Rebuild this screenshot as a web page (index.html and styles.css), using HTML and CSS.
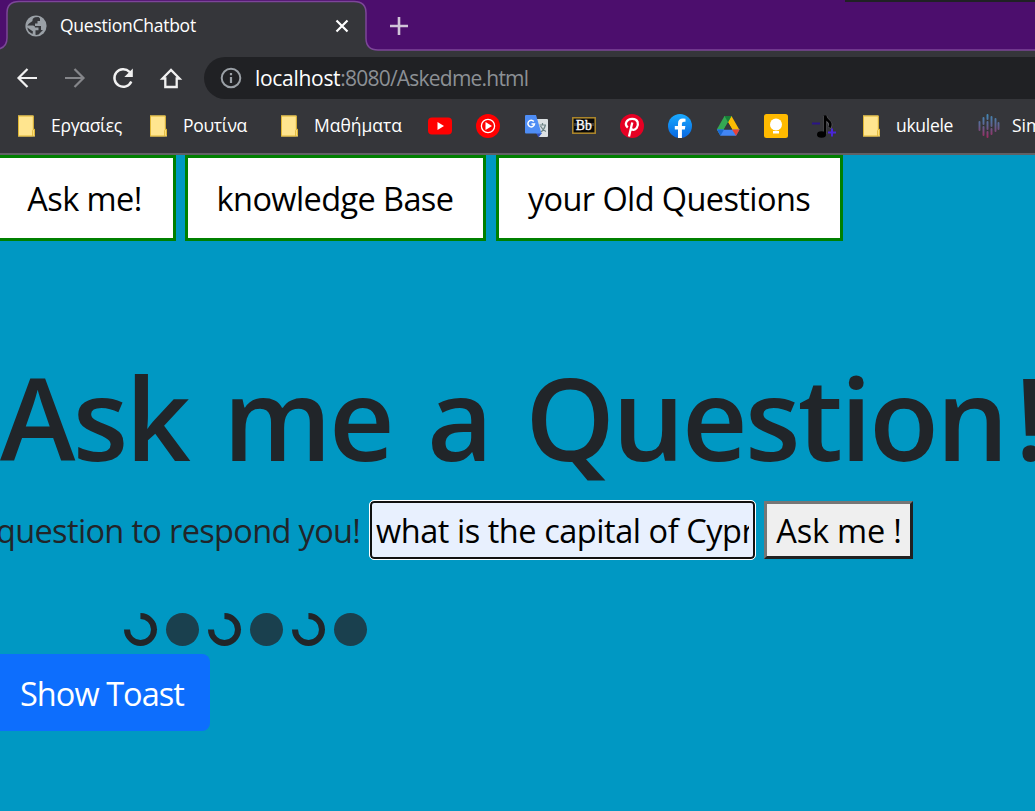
FILE: index.html
```html
<!DOCTYPE html>
<html lang="en">
<head>
<meta charset="utf-8">
<title>QuestionChatbot</title>
<link rel="stylesheet" href="styles.css">
</head>
<body>
<svg class="defs" width="0" height="0">
  <symbol id="folder" viewBox="0 0 24 24"><path d="M3 1.500h15.500v14H20V22.500H3z" fill="#ffe58f"/><path d="M3.500 2v20h14.200v-5.500q0-1.300 1.300-1.300h.5v6q0 .8-1 .8M3 2h15.300v13" fill="none" stroke="#dfb634"/></symbol>
</svg>
<header class="browser">
  <div class="tabstrip">
    <svg class="tab-shape" viewBox="0 0 1035 51"><path d="M-6 51V49.500Q7 49.500 7 38V13Q7 1.500 19 1.500H354Q366 1.500 366 13V38Q366 50 378 50H1036V53H-6z" fill="#35363a" stroke="#7c4698" stroke-width="1.500"/><path d="M845 0H1035V2H845z" fill="#202124"/></svg>
    <div class="tab">
      <svg class="globe" viewBox="0 0 24 24"><circle cx="12" cy="12" r="10.600" fill="#9aa0a6"/><path d="M11 3.200Q8 4.500 8.500 7L5 9.500 3.300 11.500H9q2 0 2 2h3.500v2.700h-3v4.600q1 .3 3-.3l4.500-4.500h-2V12H11V9.500h2.500V7H16V4.500L14.500 3zM3.300 13.500Q4 18 8.500 20l.5-2.500z" fill="#35363a"/></svg>
      <span class="tab-title">QuestionChatbot</span>
      <svg class="close" viewBox="0 0 14 14"><path d="m1.500 1.500 11 11m0-11-11 11" stroke="#fff" stroke-width="2.200"/></svg>
    </div>
    <svg class="plus" viewBox="0 0 20 20"><path d="M10 1v18M1 10h18" stroke="#d0c4d8" stroke-width="2.600"/></svg>
  </div>
  <div class="toolbar">
    <svg class="tool" viewBox="0 0 24 24"><path d="M22 12H4m8.500-9L3.500 12l9 9" fill="none" stroke="#f1f1f1" stroke-width="2.200"/></svg>
    <svg class="tool" viewBox="0 0 24 24"><path d="M2 12h18m-8.500-9 9 9-9 9" fill="none" stroke="#85868a" stroke-width="2.200"/></svg>
    <svg class="tool" viewBox="0 0 24 24"><path d="M20.300 15.500A8.800 8.800 0 1 1 18.500 5.800L20 7" fill="none" stroke="#f1f1f1" stroke-width="2.400"/><path d="M21.800 2.500v8.500h-8.500z" fill="#f1f1f1"/></svg>
    <svg class="tool" viewBox="0 0 24 24"><path d="M3.500 12.500 12 4l8.500 8.500h-2.800V21H6.300v-8.500z" fill="none" stroke="#f1f1f1" stroke-width="2.300"/></svg>
    <div class="address">
      <svg class="info" viewBox="0 0 22 22"><circle cx="11" cy="11" r="9.300" fill="none" stroke="#9aa0a6" stroke-width="2"/><path d="M11 10v6M11 6v2.200" stroke="#9aa0a6" stroke-width="2.200"/></svg>
      <span class="url"><b class="host">localhost</b>:8080/Askedme.html</span>
    </div>
  </div>
  <nav class="bookmarks">
    <div class="bm bm-a"><svg class="ico"><use href="#folder"/></svg><span class="bm-label tight">Εργασίες</span></div>
    <div class="bm bm-b"><svg class="ico"><use href="#folder"/></svg><span class="bm-label tight">Ρουτίνα</span></div>
    <div class="bm bm-c"><svg class="ico"><use href="#folder"/></svg><span class="bm-label">Μαθήματα</span></div>
    <div class="icons">
      <svg class="ico" viewBox="0 0 24 24"><rect y="3.500" width="24" height="17" rx="4" fill="#f00"/><path d="m9.500 8 6.500 4-6.500 4z" fill="#fff"/></svg>
      <svg class="ico" viewBox="0 0 24 24"><circle cx="12" cy="12" r="12" fill="#f00"/><circle cx="12" cy="12" r="6.600" fill="none" stroke="#fff" stroke-width="1.300"/><path d="m9.500 8 6.500 4-6.500 4z" fill="#fff"/></svg>
      <svg class="ico" viewBox="0 0 24 24"><path d="M9 5h14q1 0 1 1v16q0 1-1 1h-8z" fill="#dce1e3"/><path d="M12 19h6l-3.500 4.500z" fill="#3551b8"/><path d="M2 1h10l5.500 18.500H2q-1 0-1-1V2q0-1 1-1z" fill="#4e8df5"/><path d="M9.800 7.500A3.300 3.300 0 1 0 10.500 10H7.500" fill="none" stroke="#fff" stroke-width="1.500"/><path d="M15.500 11H22m-3.500-2v2m3 0q-1.500 5-4.500 7m-.5-6q2 4 5.500 5.500" fill="none" stroke="#6e8587" stroke-width="1.200"/></svg>
      <svg class="ico" viewBox="0 0 24 24"><rect x=".8" y="3.800" width="22.400" height="15.400" fill="#080808" stroke="#b18a2c" stroke-width="1.500"/><path d="M2 9h20v3H2z" fill="#38393c"/><text class="bb" x="3.800" y="15.800" textLength="16" lengthAdjust="spacingAndGlyphs">Bb</text></svg>
      <svg class="ico" viewBox="0 0 24 24"><circle cx="12" cy="12" r="12" fill="#e60023"/><path d="M7.800 13.500Q4.800 11 6.500 7.800C8.500 4.300 15.800 3.700 17.600 8c1.300 4.500-2 8.500-4.900 7.700-1.300-.4-1.700-1.300-1.700-1.300M12.300 8.500 9 22.500" fill="none" stroke="#fff" stroke-width="2.300"/></svg>
      <svg class="ico" viewBox="0 0 24 24"><linearGradient id="fb" x2="0" y2="1"><stop stop-color="#19aaff"/><stop offset="1" stop-color="#0866e0"/></linearGradient><circle cx="12" cy="12" r="12" fill="url(#fb)"/><path d="M10 24v-8.500H6.800V12H10V9.500q0-5 5-5 1.300 0 2.500.3v3h-1.600q-2 0-2 2V12h3.500l-.6 3.500h-2.900V24z" fill="#fff"/></svg>
      <svg class="ico" viewBox="0 0 24 24"><path d="M8.500 2h7l8 14h-7z" fill="#fbbc04"/><path d="M8.500 2 .8 15.500l3.700 6L15.500 2z" fill="#34a853"/><path d="M1 15.500h22.500l-3.500 6.200H4.500z" fill="#4285f4"/><path d="m12 8.500 4.200 7H7.800z" fill="#35363a"/><path d="M8.500 2h7L12 8.300z" fill="#188038"/><path d="m16 15.500h7.500l-3.500 6.200z" fill="#ea4335"/><path d="M1 15.500h7l-3.500 6.200z" fill="#1967d2"/></svg>
      <svg class="ico" viewBox="0 0 24 24"><rect width="24" height="24" rx="2.500" fill="#ffba00"/><circle cx="12" cy="10.500" r="6" fill="#fff"/><path d="M9 12h6v3.500H9zm0 5h6v2.500H9z" fill="#fff"/></svg>
      <svg class="ico" viewBox="0 0 24 24"><path d="M0 9.500h8" stroke="#2b1587" stroke-width="2"/><path d="M13 20V2q1 4 4 6 2.500 2 .5 6" fill="none" stroke="#606064" stroke-width="4"/><path d="M13 20V1.500q1 4 4 6 2.500 2 .5 6" fill="none" stroke="#000" stroke-width="2.600"/><ellipse cx="9.500" cy="20.500" rx="4.500" ry="3.300" fill="#000"/><path d="M16 18.500h8m-4-4v8" stroke="#4a25d8" stroke-width="2"/></svg>
    </div>
    <div class="bm bm-d"><svg class="ico"><use href="#folder"/></svg><span class="bm-label tight">ukulele</span></div>
    <div class="bm bm-e"><svg class="ico" viewBox="0 0 24 24"><linearGradient id="sim" gradientUnits="userSpaceOnUse" x1="0" y1="0" x2="0" y2="24"><stop stop-color="#408bb8"/><stop offset=".5" stop-color="#62608e"/><stop offset="1" stop-color="#a0265f"/></linearGradient><path d="M2.500 8v8M6.500 4v6m0 3v8M10.500 1v4m0 3v7m0 3v5M14.500 3v9m0 3v5M18.500 5v12M21.500 9v6" fill="none" stroke="url(#sim)" stroke-width="1.900" stroke-linecap="round"/></svg><span class="bm-label">Simp</span></div>
  </nav>
</header>
<main class="page">
  <nav class="menu">
    <button class="menu-btn m1">Ask me!</button>
    <button class="menu-btn m2">knowledge Base</button>
    <button class="menu-btn m3">your Old Questions</button>
  </nav>
  <h1 class="headline">Ask me a Question<span class="bang">!</span></h1>
  <div class="ask">
    <span class="prompt">question to respond you!</span>
    <div class="field"><span class="value">what is the capital of Cyprus</span></div>
    <button class="send">Ask me !</button>
  </div>
  <div class="loaders"><i class="spin"></i><i class="grow"></i><i class="spin"></i><i class="grow"></i><i class="spin"></i><i class="grow"></i></div>
  <button class="toast">Show Toast</button>
</main>
</body>
</html>
```
FILE: styles.css
```css
* { box-sizing: border-box; }
body { margin: 0; width: 1035px; height: 811px; overflow: hidden; background: #0098c3; font-family: "Open Sans", "Noto Sans", sans-serif; white-space: nowrap; }
.defs { position: absolute; }
svg { display: block; flex: none; }
button { font-family: inherit; margin: 0; white-space: nowrap; }
.browser { background: #35363a; height: 155px; border-bottom: 2px solid #606165; color: #fff; }
.tabstrip { position: relative; display: flex; align-items: center; height: 51px; background: #4c0e6d; }
.tab-shape { position: absolute; left: 0; top: 0; width: 1035px; height: 51px; }
.tab { position: relative; display: flex; align-items: center; width: 366px; height: 51px; padding-left: 24px; }
.globe { width: 24px; height: 24px; }
.tab-title { width: 275px; padding: 0 0 2px 12px; font-size: 17.500px; letter-spacing: -0.250px; }
.close { width: 14px; height: 14px; margin-left: 12px; }
.plus { position: relative; width: 20px; height: 20px; margin-left: 23px; }
.toolbar { display: flex; align-items: center; gap: 24px; height: 54px; padding-left: 15px; }
.tool { width: 24px; height: 24px; }
.address { display: flex; align-items: center; width: 850px; height: 42px; margin-left: -3px; padding-left: 16px; border-radius: 21px 0 0 21px; background: #202124; flex: none; }
.info { width: 22px; height: 22px; }
.url { margin-left: 13px; color: #8c9095; font-size: 21px; letter-spacing: -0.780px; }
.host { font-weight: 400; color: #fff; letter-spacing: -0.300px; }
.bookmarks { display: flex; align-items: center; height: 42px; padding-left: 15px; font-size: 17.500px; }
.bm { display: flex; align-items: center; gap: 12px; flex: none; }
.bm-label { padding-bottom: 2px; }
.tight { letter-spacing: -0.300px; }
.bm-a { width: 132px; }
.bm-b { width: 131px; }
.bm-c { width: 150px; }
.bm-d { width: 117px; }
.bm-e { gap: 11px; }
.icons { display: flex; gap: 24px; width: 432px; flex: none; }
.ico { width: 24px; height: 24px; }
.bb { font: 400 14px "Liberation Serif", serif; fill: #fff; stroke: #fff; stroke-width: .3px; }
.page { height: 656px; overflow: hidden; color: #212529; }
.menu { display: flex; gap: 10px; margin-left: -6px; }
.menu-btn { height: 86px; padding: 1px 1px 0 0; border: 3px solid #008000; background: #fff; color: #000; font-size: 32.500px; font-weight: 370; letter-spacing: -0.600px; flex: none; }
.m1 { width: 182px; }
.m2 { width: 301px; margin-left: -1px; }
.m3 { width: 347px; }
.headline { margin: 101px 0 0; font-size: 114px; line-height: 150px; font-weight: 600; letter-spacing: -2.700px; word-spacing: 8px; }
.bang { margin-left: 9px; }
.ask { display: flex; align-items: center; height: 60px; margin-top: 8px; font-size: 32.500px; font-weight: 370; }
.prompt { width: 369px; margin-left: -4px; letter-spacing: -0.650px; padding-top: 1px; }
.field { display: flex; align-items: center; width: 387px; height: 60px; margin-left: 4px; padding: 3px 6px 2px; border: 1px solid #fff; border-radius: 5px; background: #e8f0fe; box-shadow: inset 0 0 0 2px #101010; color: #000; flex: none; }
.value { display: block; width: 373px; overflow: hidden; letter-spacing: -0.450px; }
.send { width: 149px; height: 58px; margin-left: 8px; padding: 1px 0 0 1px; border: 3px solid; border-color: #767676 #212121 #212121 #767676; background: #efefef; color: #000; font-size: 32.500px; font-weight: 370; letter-spacing: -0.200px; flex: none; }
.loaders { display: flex; gap: 9px; margin: 53px 0 0 124px; }
.spin, .grow { width: 33px; height: 33px; border-radius: 50%; }
.spin { border: 6px solid #212529; border-left-color: transparent; rotate: 45deg; }
.grow { background: #1a404e; }
.toast { display: block; width: 222px; height: 77px; margin: 8px 0 0 -12px; padding: 1px 0 0 6px; border: 0; border-radius: 8px; background: #0d6efd; color: #fff; font-size: 32.500px; font-weight: 370; letter-spacing: -0.950px; }
```
